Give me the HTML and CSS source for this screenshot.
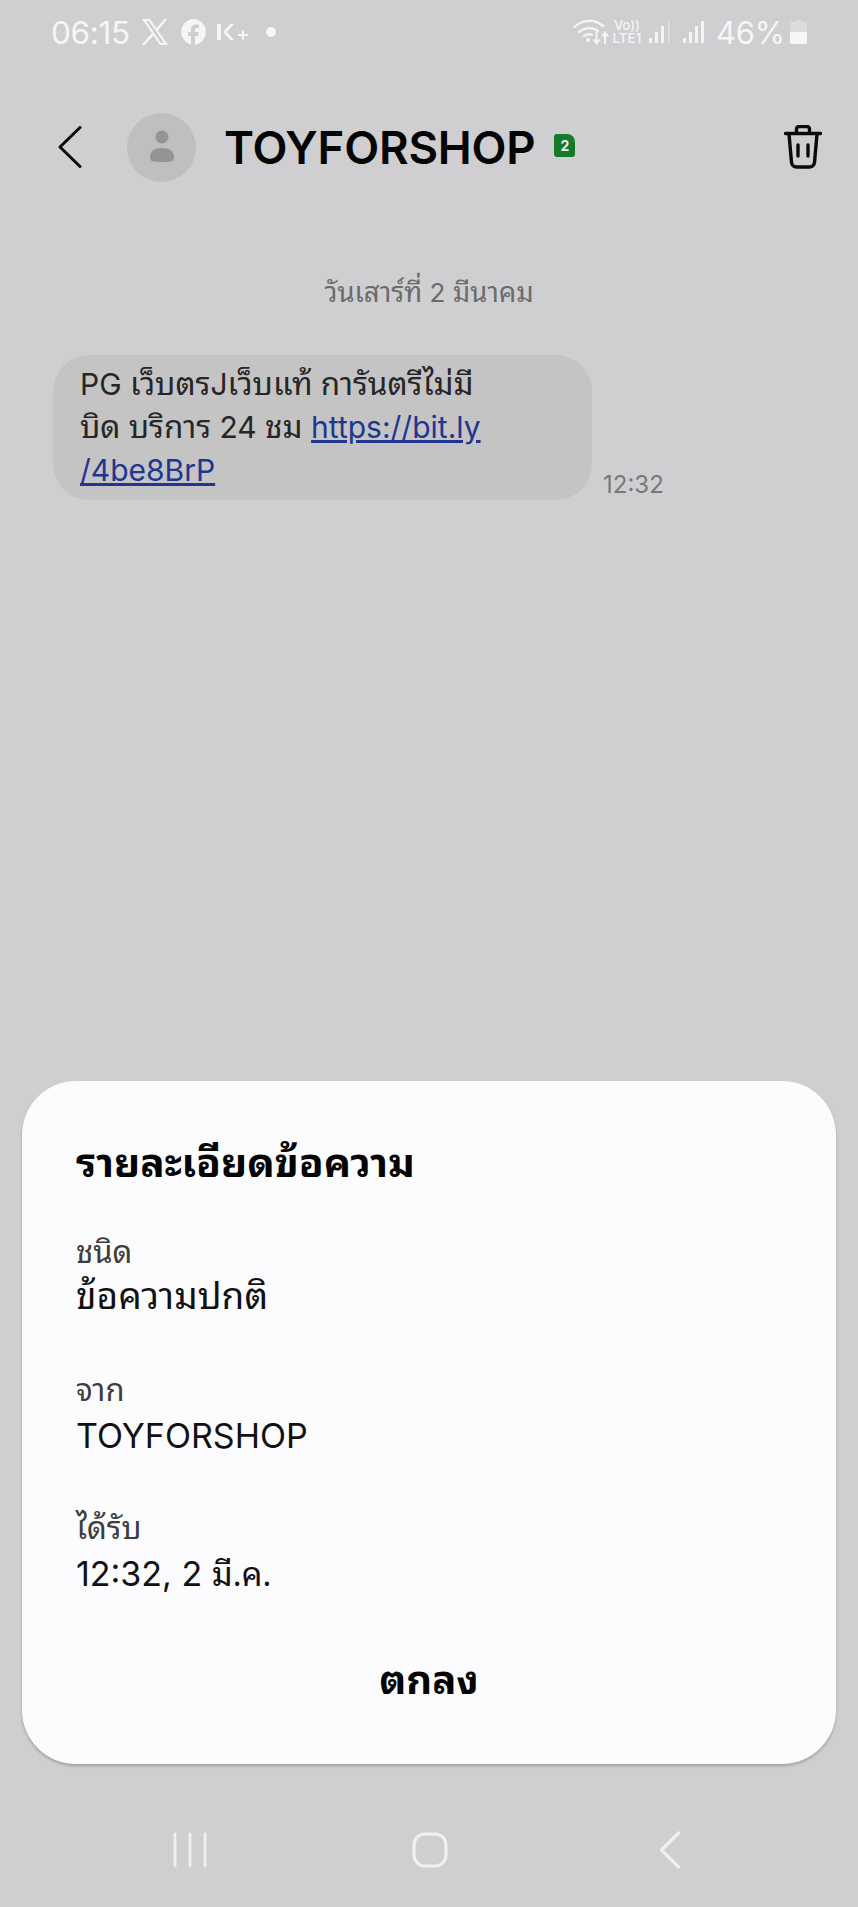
FILE: index.html
```html
<!DOCTYPE html>
<html lang="th">
<head>
<meta charset="utf-8">
<title>TOYFORSHOP</title>
<link rel="stylesheet" href="styles.css">
</head>
<body>
<div class="screen">
  <div class="status">
    <div class="status-left">
      <span class="clock">06:15</span>
      <svg class="ic-x" viewBox="0 0 30 28"><path d="M2 1h8l18 26h-8zM6 3l15 22h3L9 3z" fill="#f6f6f7" fill-rule="evenodd"/><path d="M26 1 17 11.500M13 16 3 27" stroke="#f6f6f7" stroke-width="2.600" fill="none"/></svg>
      <svg class="ic-fb" viewBox="0 0 26 26"><path d="M13 0a13 13 0 0 0-3 25.600V17H7v-4h3v-2.500C10 7 12 5.500 15 5.500c1 0 2.200.2 3 .3V9h-2c-1.700 0-2 .8-2 2v2h3.800l-.7 4H14v8.800A13 13 0 0 0 13 0z" fill="#f6f6f7"/></svg>
      <svg class="ic-k" viewBox="0 0 32 18"><path d="M1 1h4v16H1zM7 9l7-8h4l-7 8 7 8h-4z" fill="#f6f6f7"/><path d="M22 12h10M27 7.500v9" stroke="#f6f6f7" stroke-width="2"/></svg>
      <span class="dot"></span>
    </div>
    <div class="status-right">
      <svg class="ic-wifi" viewBox="0 0 36 26"><g fill="none" stroke="#f4f4f5" stroke-width="2.400" stroke-linecap="round"><path d="M1.500 8C10 0 22 0 30 7"/><path d="M6 13c6-5 14-5 19-1"/><path d="M11 17c3-2 6-2 8-1"/></g><circle cx="15" cy="21" r="2" fill="#f4f4f5"/><path d="M23.500 13v11M20.500 20.500l3 4 3-4M32 25V14M29 17.500l3-4 3 4" fill="none" stroke="#f4f4f5" stroke-width="2"/></svg>
      <span class="volte"><span class="vo">Vo))</span><span class="lte">LTE1</span></span>
      <svg class="ic-sig" viewBox="0 0 22 24"><g fill="#f4f4f5"><rect x="0" y="18" width="3" height="5"/><rect x="6" y="12" width="3" height="11"/><rect x="12" y="6" width="3" height="17"/><rect x="19" y="1" width="1.500" height="22" opacity=".5"/></g></svg>
      <svg class="ic-sig2" viewBox="0 0 22 24"><g fill="#f4f4f5"><rect x="0" y="18" width="3" height="5"/><rect x="6" y="12" width="3" height="11"/><rect x="12" y="6" width="3" height="17"/><rect x="18" y="1" width="3" height="22"/></g></svg>
      <span class="pct">46%</span>
      <svg class="ic-bat" viewBox="0 0 17 24"><path d="M5 0h7v2h3a2 2 0 0 1 2 2v8H0V4a2 2 0 0 1 2-2h3z" fill="#dcdcde"/><path d="M0 12h17v10a2 2 0 0 1-2 2H2a2 2 0 0 1-2-2z" fill="#f6f6f7"/></svg>
    </div>
  </div>

  <header class="appbar">
    <svg class="ic-back" viewBox="0 0 24 42"><path d="M22 1.500 2 21l20 19.500" fill="none" stroke="#0a0a0a" stroke-width="3" stroke-linecap="round" stroke-linejoin="round"/></svg>
    <div class="avatar">
      <svg class="ic-person" viewBox="0 0 26 34"><circle cx="13" cy="7" r="6.500" fill="#949495"/><path d="M1 27c0-6 5-9 12-9s12 3 12 9c0 3-1.500 4-4 4.500-5 1-11 1-16 0-2.500-.5-4-1.500-4-4.500z" fill="#949495"/></svg>
    </div>
    <h1 class="name">TOYFORSHOP</h1>
    <span class="sim">2</span>
    <svg class="ic-trash" viewBox="0 0 38 44"><g fill="none" stroke="#0a0a0a" stroke-width="3.400" stroke-linecap="round" stroke-linejoin="round"><path d="M1.500 8.500h35"/><path d="M12.500 8V4a2.500 2.500 0 0 1 2.500-2.500h8A2.500 2.500 0 0 1 25.500 4v4"/><path d="M5 9l2.500 28.500a5 5 0 0 0 5 4.500h13a5 5 0 0 0 5-4.500L33 9"/><path d="M14 20v11M24 20v11"/></g></svg>
  </header>

  <main class="thread">
    <div class="date"><span class="th">วันเสาร์ที่</span> 2 <span class="th">มีนาคม</span></div>
    <div class="msg">
      <div class="bubble">PG <span class="th">เว็บตร</span>J<span class="th">เว็บแท้ การันตรีไม่มี</span><br><span class="th">บิด บริการ</span> 24 <span class="th">ชม</span> <a class="link" href="#">https://bit.ly<br>/4be8BrP</a></div>
      <span class="msg-time">12:32</span>
    </div>
  </main>

  <nav class="navbar">
    <svg class="ic-recent" viewBox="0 0 34 36"><path d="M2 2v32M17 2v32M32 2v32" stroke="#f0f0f1" stroke-width="2.800" stroke-linecap="round"/></svg>
    <svg class="ic-home" viewBox="0 0 36 36"><rect x="2" y="2" width="32" height="32" rx="11" fill="none" stroke="#f0f0f1" stroke-width="3.200"/></svg>
    <svg class="ic-nback" viewBox="0 0 22 38"><path d="M19.500 2 2.500 19l17 17" fill="none" stroke="#f0f0f1" stroke-width="3.200" stroke-linecap="round" stroke-linejoin="round"/></svg>
  </nav>

  <section class="sheet">
    <h2 class="sheet-title th">รายละเอียดข้อความ</h2>
    <dl class="fields">
      <div class="field"><dt class="th">ชนิด</dt><dd class="th">ข้อความปกติ</dd></div>
      <div class="field"><dt class="th">จาก</dt><dd>TOYFORSHOP</dd></div>
      <div class="field"><dt class="th">ได้รับ</dt><dd>12:32, 2 <span class="th">มี.ค.</span></dd></div>
    </dl>
    <div class="ok th">ตกลง</div>
  </section>
</div>
</body>
</html>
```
FILE: styles.css
```css
* { box-sizing: border-box; }
html, body { margin: 0; padding: 0; }
body { font-family: "Inter", "Noto Sans", "Liberation Sans", sans-serif; }
.th { font-family: "Noto Sans Thai Looped", "Loma", "Garuda", "Waree", "Tlwg Typist", "Inter", "Noto Sans", sans-serif; }
.screen {
  position: relative;
  width: 858px;
  height: 1907px;
  background: #cfcfd1;
  overflow: hidden;
  display: flex;
  flex-direction: column;
}
.status {
  height: 64px;
  padding: 0 51px 0 51px;
  display: flex;
  justify-content: space-between;
  align-items: center;
  color: #f6f6f7;
}
.status-left, .status-right { display: flex; align-items: center; }
.clock { font-size: 31.500px; letter-spacing: -.3px; width: 89px; }
.ic-x { width: 30px; height: 28px; margin-right: 11px; }
.ic-fb { width: 26px; height: 26px; margin-right: 9px; }
.ic-k { width: 32px; height: 18px; margin-right: 18px; }
.dot { width: 10px; height: 10px; border-radius: 50%; background: #f6f6f7; }
.ic-wifi { width: 36px; height: 26px; margin-right: 2px; }
.volte { display: flex; flex-direction: column; align-items: center; width: 32px; color: #f4f4f5; margin-right: 6px; }
.vo { font-size: 13px; line-height: 13px; font-weight: 500; }
.lte { font-size: 13.500px; line-height: 13px; font-weight: 500; }
.ic-sig { width: 22px; height: 24px; margin-right: 12px; }
.ic-sig2 { width: 22px; height: 24px; margin-right: 11px; }
.pct { font-size: 31px; letter-spacing: -.2px; margin-right: 5px; }
.ic-bat { width: 17px; height: 24px; }

.appbar {
  height: 166px;
  padding: 0 36px 0 58px;
  display: flex;
  align-items: center;
}
.ic-back { width: 24px; height: 42px; flex: none; margin-right: 45px; }
.avatar {
  width: 69px; height: 69px; flex: none;
  border-radius: 50%;
  background: #bfbfc0;
  display: flex; align-items: center; justify-content: center;
  margin-right: 28px;
}
.ic-person { width: 26px; height: 34px; }
.name { margin: 0 19px 0 0; font-size: 45.500px; font-weight: 600; color: #050505; letter-spacing: -.2px; }
.sim {
  width: 21px; height: 23px;
  margin-top: -4px;
  background: #157a2b;
  color: #e8f2ea;
  font-size: 14px; font-weight: 700;
  display: flex; align-items: center; justify-content: center;
  border-radius: 3px 8px 3px 3px;
}
.ic-trash { width: 38px; height: 44px; margin-left: auto; }

.thread { flex: 1; padding-top: 46px; }
.date { text-align: center; font-size: 26px; line-height: 34px; height: 34px; color: #6b6b6c; }
.date .th { font-size: 27.500px; line-height: 1; }
.msg { display: flex; align-items: flex-end; margin: 45px 0 0 53px; }
.bubble {
  width: 539px; height: 145px;
  background: #c4c4c5;
  border-radius: 36px;
  padding: 8px 27px;
  font-size: 30px;
  line-height: 43px;
  color: #262627;
}
.bubble .th { font-size: 31.500px; line-height: 1; }
.link { color: #20368f; text-decoration: underline; }
.msg-time { margin-left: 11px; font-size: 24px; line-height: 30px; color: #78787a; }

.navbar {
  height: 112px;
  padding: 0 0 2px 173px;
  display: flex;
  align-items: center;
}
.ic-recent { width: 34px; height: 36px; margin-right: 205px; }
.ic-home { width: 36px; height: 36px; margin-right: 211px; }
.ic-nback { width: 22px; height: 38px; }

.sheet {
  position: absolute;
  left: 22px; top: 1081px;
  width: 814px; height: 683px;
  background: #fcfcfe;
  border-radius: 54px;
  box-shadow: 0 2px 3px rgba(0,0,0,.22);
  padding: 53px 54px 0;
  display: flex;
  flex-direction: column;
}
.sheet-title { margin: 0; font-size: 40.500px; line-height: 50px; font-weight: 700; color: #050505; }
.fields { margin: 48px 0 0; display: flex; flex-direction: column; gap: 48px; }
.field dt { font-size: 31px; line-height: 34px; margin-bottom: 8px; color: #3d3d3e; }
.field dd { margin: 0; font-size: 34px; line-height: 48px; height: 48px; color: #111; }
.field dd.th { font-size: 37px; line-height: 38px; }
.field dd .th { font-size: 33px; line-height: 1; }
.ok { margin-top: 54px; text-align: center; font-size: 40px; font-weight: 700; line-height: 48px; color: #050505; }
```
